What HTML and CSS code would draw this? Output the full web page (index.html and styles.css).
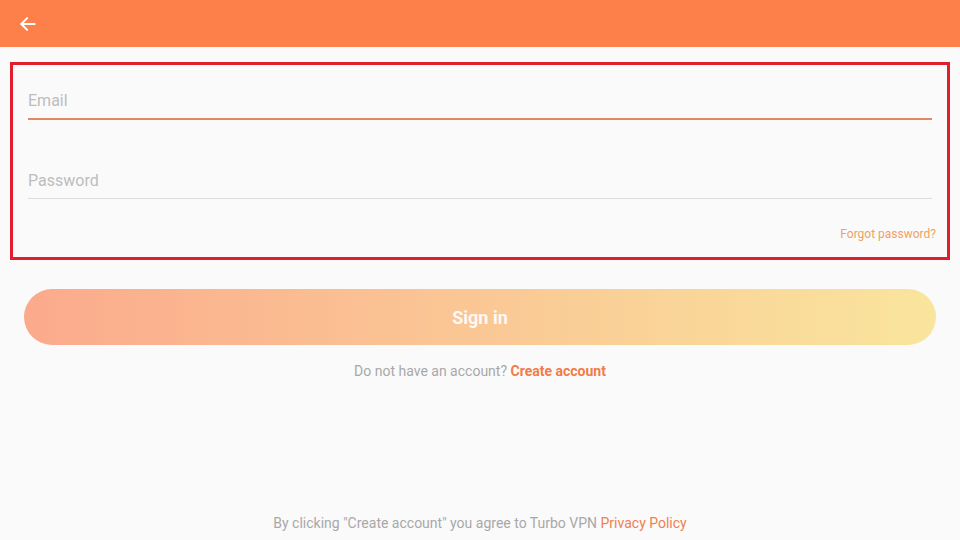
FILE: index.html
```html
<!DOCTYPE html>
<html lang="en">
<head>
  <meta charset="UTF-8">
  <meta name="viewport" content="width=device-width, initial-scale=1.0">
  <title>Sign in</title>
  <link rel="stylesheet" href="styles.css">
</head>
<body>
  <!-- Top bar -->
  <header class="topbar">
    <button class="back-btn" aria-label="Back">
      <svg width="20" height="20" viewBox="0 0 24 24" fill="none" stroke="#fff" stroke-width="2.4" stroke-linecap="round" stroke-linejoin="round">
        <path d="M20 12H4"/>
        <path d="M11 5l-7 7 7 7"/>
      </svg>
    </button>
  </header>

  <main class="page">
    <!-- Login form -->
    <div class="form-box">
      <div class="field field-active">
        <span class="placeholder">Email</span>
      </div>
      <div class="field field-password">
        <span class="placeholder">Password</span>
      </div>
      <div class="forgot">
        <a href="#">Forgot password?</a>
      </div>
    </div>

    <button class="signin-btn">Sign in</button>

    <p class="register">Do not have an account? <a href="#">Create account</a></p>

    <p class="legal">By clicking "Create account" you agree to Turbo VPN <a href="#">Privacy Policy</a></p>
  </main>
</body>
</html>
```

FILE: styles.css
```css
* {
  box-sizing: border-box;
}
html,
body {
  height: 100%;
}
body {
  margin: 0;
  font-family: Roboto, "Liberation Sans", Arial, sans-serif;
  background-color: #fafafa;
  display: flex;
  flex-direction: column;
}
a {
  text-decoration: none;
}
.topbar {
  height: 47px;
  background-color: #fd7f4a;
  display: flex;
  align-items: center;
  padding-left: 18px;
  flex-shrink: 0;
}
.back-btn {
  background: none;
  border: none;
  padding: 0;
  width: 20px;
  height: 20px;
  display: flex;
  cursor: pointer;
}
.page {
  flex: 1;
  display: flex;
  flex-direction: column;
  padding: 15px 24px 0;
}
.form-box {
  margin: 0 -14px;
  height: 198px;
  border: 3px solid #e21d2c;
  padding: 24px 15px 0;
}
.field {
  font-size: 16px;
  line-height: 24px;
  padding-bottom: 5px;
  border-bottom: 1px solid #dcdcdc;
}
.placeholder {
  color: #bdbdbd;
}
.field-active {
  border-bottom: 2px solid #e08a62;
}
.field-password {
  margin-top: 49px;
  padding-bottom: 5px;
}
.forgot {
  margin-top: 27px;
  margin-right: -4px;
  text-align: right;
  font-size: 12px;
  line-height: 16px;
}
.forgot a {
  color: #eea262;
}
.signin-btn {
  margin-top: 29px;
  height: 56px;
  border: none;
  border-radius: 28px;
  background: linear-gradient(to right, #fbaa8c, #f9e59d);
  color: rgba(255, 255, 255, 0.92);
  font-family: inherit;
  font-size: 18px;
  font-weight: bold;
  cursor: pointer;
}
.register {
  margin: 17px 0 0;
  text-align: center;
  font-size: 14px;
  line-height: 18px;
  color: #a8a8a8;
}
.register a {
  color: #f27c47;
  font-weight: bold;
}
.legal {
  margin: auto 0 8px;
  text-align: center;
  font-size: 14px;
  line-height: 18px;
  color: #a8a8a8;
}
.legal a {
  color: #ef7f52;
}
```
